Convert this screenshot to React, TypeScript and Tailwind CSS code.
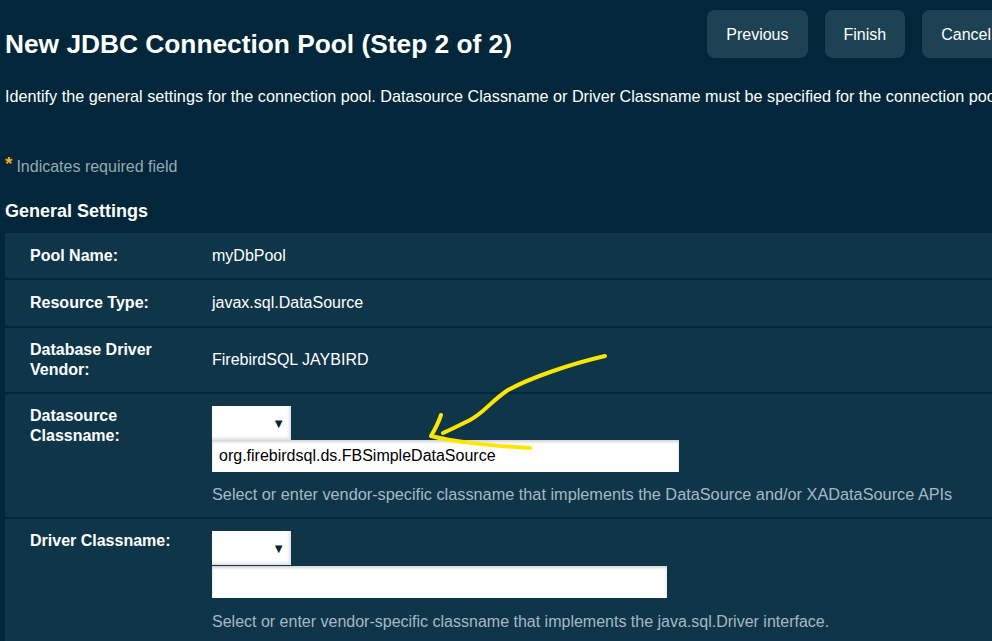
import React from 'react';

type Row = {
  label: string;
  value: string;
  pad: string;
};

function Select() {
  return (
    <div className="relative w-[79px] h-[34px] bg-white shadow-[inset_-2px_-2px_3px_rgba(0,0,0,0.12)]">
      <span className="absolute right-[6px] top-1/2 -translate-y-1/2 text-[13px] leading-none text-[#0b2535]">▼</span>
    </div>
  );
}

function TextInput({ value, width }: { value?: string; width: string }) {
  return (
    <div className={`${width} h-[32px] bg-white pl-[7px] flex items-center text-black text-[16px] shadow-[inset_0_2px_3px_rgba(0,0,0,0.18)]`}>
      {value}
    </div>
  );
}

export default function App() {
  const simpleRows: Row[] = [
    { label: 'Pool Name:', value: 'myDbPool', pad: 'pt-[13px] pb-[12px]' },
    { label: 'Resource Type:', value: 'javax.sql.DataSource', pad: 'pt-[13px] pb-[13px]' },
    { label: 'Database Driver Vendor:', value: 'FirebirdSQL JAYBIRD', pad: 'pt-[12px] pb-[12px]' },
  ];

  return (
    <div className="relative w-[992px] h-[641px] overflow-hidden bg-[#03273a] text-white font-['Liberation_Sans',Arial,sans-serif]">
      <div className="w-[1040px] pl-[5px]">
        <div className="flex items-start">
          <h1 className="mt-[29px] text-[26.3px] leading-[30px] font-bold flex-1">New JDBC Connection Pool (Step 2 of 2)</h1>
          <div className="mt-[10px] flex gap-[17px] mr-[30px]">
            <button className="h-[48px] px-[19px] pt-[2px] rounded-[8px] bg-[#1d4253] text-[16px]">Previous</button>
            <button className="h-[48px] px-[19px] pt-[2px] rounded-[8px] bg-[#1d4253] text-[16px]">Finish</button>
            <button className="h-[48px] px-[19px] pt-[2px] rounded-[8px] bg-[#1d4253] text-[16px]">Cancel</button>
          </div>
        </div>

        <p className="mt-[27px] text-[16.2px] leading-5 whitespace-nowrap">
          Identify the general settings for the connection pool. Datasource Classname or Driver Classname must be specified for the connection pool.
        </p>

        <p className="mt-[51px] text-[16px] leading-5 text-[#98a9b2] flex items-start">
          <span className="text-[#f5a623] text-[19px] leading-[14px] font-bold mr-[4px]">*</span>
          <span>Indicates required field</span>
        </p>

        <h2 className="mt-[23px] text-[18px] leading-[22px] font-bold">General Settings</h2>

        <div className="mt-[11px] flex flex-col gap-[2px] text-[16px] leading-5">
          {simpleRows.map((r) => (
            <div key={r.label} className={`flex bg-[#0f3549] ${r.pad}`}>
              <div className="w-[207px] pl-[25px] pr-[30px] font-bold">{r.label}</div>
              <div className="self-center">{r.value}</div>
            </div>
          ))}

          <div className="flex bg-[#0f3549] pt-[12px] pb-[13px]">
            <div className="w-[207px] pl-[25px] pr-[30px] font-bold">Datasource Classname:</div>
            <div className="flex flex-col">
              <Select />
              <TextInput value="org.firebirdsql.ds.FBSimpleDataSource" width="w-[467px]" />
              <div className="mt-[12px] text-[16.3px] text-[#a6b9c3] whitespace-nowrap">
                Select or enter vendor-specific classname that implements the DataSource and/or XADataSource APIs
              </div>
            </div>
          </div>

          <div className="flex bg-[#0f3549] pt-[12px] pb-[14px]">
            <div className="w-[207px] pl-[25px] pr-[30px] font-bold">Driver Classname:</div>
            <div className="flex flex-col">
              <div className="h-[35px]">
                <Select />
              </div>
              <TextInput width="w-[455px]" />
              <div className="mt-[14px] text-[16px] text-[#a6b9c3] whitespace-nowrap">
                Select or enter vendor-specific classname that implements the java.sql.Driver interface.
              </div>
            </div>
          </div>
        </div>
      </div>

      <svg className="absolute left-0 top-0 pointer-events-none" width="992" height="641" viewBox="0 0 992 641" fill="none">
        <path
          d="M605 356 C 570 364, 530 378, 508 390 C 490 402, 485 412, 470 420 C 460 425, 450 430, 443 433"
          stroke="#ffe600"
          strokeWidth="4"
          strokeLinecap="round"
          strokeLinejoin="round"
        />
        <path
          d="M441 415 C 438 424, 434 431, 431 436 C 450 441, 490 446, 530 448"
          stroke="#ffe600"
          strokeWidth="4"
          strokeLinecap="round"
          strokeLinejoin="round"
        />
      </svg>
    </div>
  );
}
